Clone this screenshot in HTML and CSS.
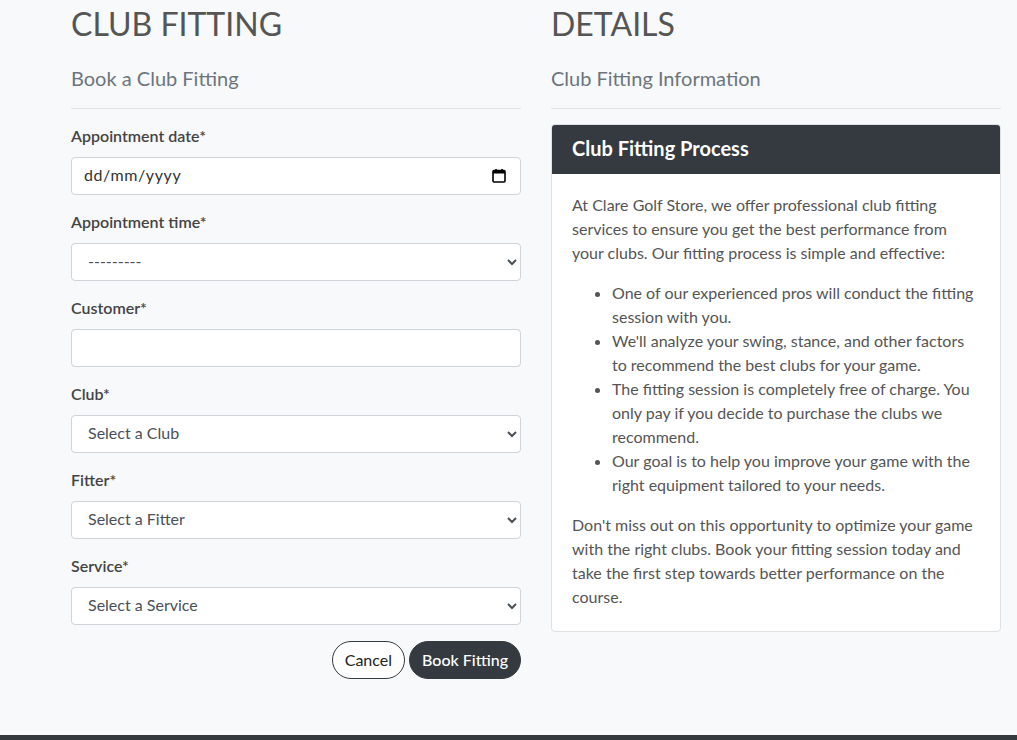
FILE: index.html
```html
<!DOCTYPE html>
<html lang="en">
<head>
<meta charset="utf-8">
<title>Club Fitting</title>
<link rel="stylesheet" href="styles.css">
</head>
<body>
<main class="page">
  <section class="col">
    <h1 class="title">CLUB FITTING</h1>
    <h2 class="subtitle">Book a Club Fitting</h2>
    <hr class="rule">
    <form class="form">
      <div class="group">
        <label class="label" for="date">Appointment date*</label>
        <div class="date-wrap">
          <input class="control date" id="date" type="text" placeholder="dd/mm/yyyy">
          <svg class="cal" width="14" height="14" viewBox="0 0 14 14" aria-hidden="true">
            <rect x="1" y="1.5" width="12" height="11.5" rx="1" fill="none" stroke="#000" stroke-width="1.6"/>
            <rect x="1" y="1.5" width="12" height="3" fill="#000"/>
            <rect x="3.2" y="0" width="1.6" height="2" fill="#000"/>
            <rect x="9.2" y="0" width="1.6" height="2" fill="#000"/>
          </svg>
        </div>
      </div>
      <div class="group">
        <label class="label" for="time">Appointment time*</label>
        <select class="control select" id="time"><option>---------</option></select>
      </div>
      <div class="group">
        <label class="label" for="customer">Customer*</label>
        <input class="control" id="customer" type="text">
      </div>
      <div class="group">
        <label class="label" for="club">Club*</label>
        <select class="control select" id="club"><option>Select a Club</option></select>
      </div>
      <div class="group">
        <label class="label" for="fitter">Fitter*</label>
        <select class="control select" id="fitter"><option>Select a Fitter</option></select>
      </div>
      <div class="group">
        <label class="label" for="service">Service*</label>
        <select class="control select" id="service"><option>Select a Service</option></select>
      </div>
      <div class="actions">
        <button type="button" class="btn btn-outline">Cancel</button>
        <button type="submit" class="btn btn-dark">Book Fitting</button>
      </div>
    </form>
  </section>
  <section class="col">
    <h1 class="title">DETAILS</h1>
    <h2 class="subtitle">Club Fitting Information</h2>
    <hr class="rule">
    <div class="card">
      <div class="card-header">Club Fitting Process</div>
      <div class="card-body">
        <p>At Clare Golf Store, we offer professional club fitting services to ensure you get the best performance from your clubs. Our fitting process is simple and effective:</p>
        <ul>
          <li>One of our experienced pros will conduct the fitting session with you.</li>
          <li>We'll analyze your swing, stance, and other factors to recommend the best clubs for your game.</li>
          <li>The fitting session is completely free of charge. You only pay if you decide to purchase the clubs we recommend.</li>
          <li>Our goal is to help you improve your game with the right equipment tailored to your needs.</li>
        </ul>
        <p class="last">Don't miss out on this opportunity to optimize your game with the right clubs. Book your fitting session today and take the first step towards better performance on the course.</p>
      </div>
    </div>
  </section>
</main>
<footer class="footer"></footer>
</body>
</html>
```
FILE: styles.css
```css
* { box-sizing: border-box; }
html, body { margin: 0; padding: 0; }
body {
  background: #f8f9fa;
  font-family: Lato, "Open Sans", sans-serif;
  font-size: 16px;
  line-height: 1.5;
  color: #555;
}
.page {
  display: grid;
  grid-template-columns: 450px 450px;
  column-gap: 30px;
  padding: 0 0 0 71px;
  height: 735px;
}
.title {
  margin: 0;
  font-size: 32px;
  font-weight: 400;
  line-height: 38px;
  color: #555;
  padding-top: 5px;
}
.subtitle {
  margin: 23px 0 0;
  font-size: 20px;
  font-weight: 400;
  line-height: 24px;
  color: #6c757d;
}
.rule {
  margin: 18px 0 15px;
  border: 0;
  border-top: 1px solid #dee2e6;
}
.form { display: flex; flex-direction: column; }
.group { margin-bottom: 15px; }
.label {
  display: block;
  font-weight: 600;
  color: #444;
  margin-bottom: 9px;
  line-height: 24px;
}
.control {
  display: block;
  width: 100%;
  height: 38px;
  padding: 4px 12px 8px;
  font-family: Lato, sans-serif;
  font-size: 16px;
  color: #495057;
  background: #fff;
  border: 1px solid #ced4da;
  border-radius: 4px;
}
.date-wrap { position: relative; }
.date::placeholder { color: #333; letter-spacing: 0.6px; }
.cal { position: absolute; right: 15px; top: 12px; }
.actions {
  display: flex;
  justify-content: flex-end;
  gap: 4px;
  margin-top: 1px;
}
.btn {
  height: 38px;
  padding: 0 12px 1px;
  font-family: Lato, sans-serif;
  font-size: 16px;
  border-radius: 19px;
  border: 1px solid #343a40;
}
.btn-outline { background: #fff; color: #222; }
.btn-dark { background: #343a40; color: #fff; font-weight: 500; }
.card {
  margin-top: 1px;
  background: #fff;
  border: 1px solid #dfe1e4;
  border-radius: 4px;
  overflow: hidden;
  align-self: start;
}
.card-header {
  background: #343a40;
  color: #fff;
  font-size: 20px;
  font-weight: 700;
  height: 49px;
  padding: 10px 20px;
  line-height: 26px;
}
.card-body { padding: 19px 20px 22px; }
.card-body p { margin: 0 0 16px; }
.card-body p.last { margin-bottom: 0; }
.card-body ul { margin: 0 0 16px; padding-left: 40px; }
.footer {
  height: 5px;
  background: #343a40;
}
```
